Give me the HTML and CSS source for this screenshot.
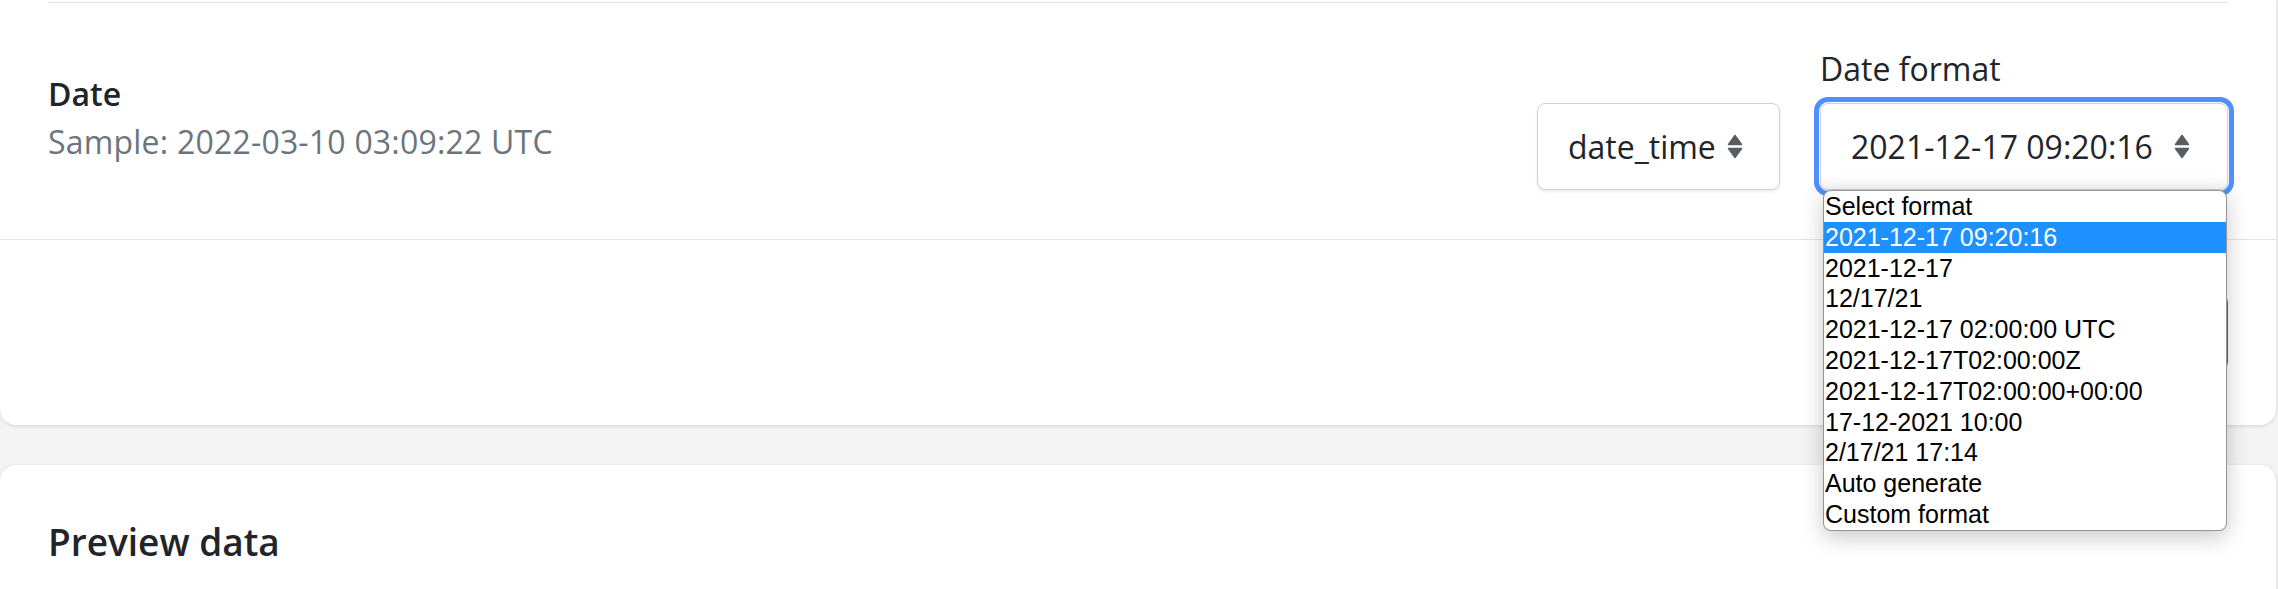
FILE: index.html
```html
<!DOCTYPE html>
<html lang="en">
<head>
<meta charset="utf-8">
<title>Date mapping</title>
<link rel="stylesheet" href="styles.css">
</head>
<body>
<main class="page">
  <section class="card card-mapping">
    <div class="card-body">
      <div class="field-row">
        <div class="field-info">
          <div class="field-name">Date</div>
          <div class="field-sample">Sample: 2022-03-10 03:09:22 UTC</div>
        </div>
        <div class="field-controls">
          <div class="select select-type" role="combobox" aria-expanded="false">
            <span class="select-value">date_time</span>
            <svg class="select-arrows" viewBox="0 0 16 25" width="16" height="25" aria-hidden="true">
              <path d="M1.5 10.5 L8 1.5 L14.5 10.5 Z" />
              <path d="M1.5 14.5 L14.5 14.5 L8 23.5 Z" />
            </svg>
          </div>
          <div class="format-field">
            <label class="format-label">Date format</label>
            <div class="select-wrap">
              <div class="select select-format" role="combobox" aria-expanded="true">
                <span class="select-value">2021-12-17 09:20:16</span>
                <svg class="select-arrows" viewBox="0 0 16 25" width="16" height="25" aria-hidden="true">
                  <path d="M1.5 10.5 L8 1.5 L14.5 10.5 Z" />
                  <path d="M1.5 14.5 L14.5 14.5 L8 23.5 Z" />
                </svg>
              </div>
              <ul class="dropdown" role="listbox">
                <li>Select format</li>
                <li class="selected">2021-12-17 09:20:16</li>
                <li>2021-12-17</li>
                <li>12/17/21</li>
                <li>2021-12-17 02:00:00 UTC</li>
                <li>2021-12-17T02:00:00Z</li>
                <li>2021-12-17T02:00:00+00:00</li>
                <li>17-12-2021 10:00</li>
                <li>2/17/21 17:14</li>
                <li>Auto generate</li>
                <li>Custom format</li>
              </ul>
            </div>
          </div>
        </div>
      </div>
    </div>
    <div class="card-footer">
      <button class="btn-primary" type="button" aria-label="Continue"></button>
    </div>
  </section>
  <section class="card card-preview">
    <h2 class="card-title">Preview data</h2>
  </section>
</main>
</body>
</html>
```
FILE: styles.css
```css
html, body {
  margin: 0;
  height: 100%;
  overflow: hidden;
  background: #f4f4f4;
}

body {
  font-family: "Open Sans", "Noto Sans", sans-serif;
  font-size: 32px;
  line-height: 1.5;
  color: #212529;
}

.page {
  display: flex;
  flex-direction: column;
  gap: 40px;
  padding-right: 2px;
}

.card {
  background: #fff;
  box-shadow: 0 1px 4px rgba(0, 0, 0, 0.13);
}

.card-mapping {
  border-radius: 0 0 16px 16px;
  padding-top: 2px;
}

.card-body {
  padding: 0 48px;
}

.field-row {
  display: flex;
  align-items: center;
  justify-content: space-between;
  border-top: 1px solid #e4e4e4;
  padding: 42px 0 49px;
}

.field-name {
  font-weight: 600;
}

.field-sample {
  color: #6c757d;
  letter-spacing: 0.2px;
}

.field-controls {
  display: flex;
  align-items: flex-end;
  gap: 40px;
}

.format-label {
  display: block;
  margin-bottom: 10px;
}

.select-wrap {
  position: relative;
}

.select {
  display: flex;
  align-items: center;
  justify-content: space-between;
  box-sizing: border-box;
  height: 87px;
  padding: 0 36px 0 30px;
  background: #fff;
  border: 1px solid #cdd1d5;
  border-radius: 8px;
  box-shadow: 0 2px 3px rgba(0, 0, 0, 0.07);
  white-space: nowrap;
}

.select-type {
  width: 243px;
}

.select-format {
  width: 408px;
  padding-right: 37px;
  outline: 5px solid #4d90fe;
  outline-offset: 1px;
  box-shadow: inset 0 -10px 14px -10px rgba(0, 0, 0, 0.08), 0 2px 3px rgba(0, 0, 0, 0.07);
}

.select-arrows {
  flex: none;
  fill: #595c60;
  stroke: #595c60;
  stroke-width: 1.5;
  stroke-linejoin: round;
}

.dropdown {
  position: absolute;
  top: 100%;
  left: 3px;
  right: 1px;
  z-index: 10;
  margin: 0;
  padding: 0;
  list-style: none;
  background: #fff;
  border: 1px solid rgba(0, 0, 0, 0.42);
  border-radius: 8px;
  box-shadow: 0 6px 22px rgba(0, 0, 0, 0.22);
  overflow: hidden;
  font-family: "Liberation Sans", Arial, sans-serif;
  font-size: 25px;
  line-height: 30.8px;
  color: #000;
}

.dropdown li {
  padding: 0 1px;
  white-space: nowrap;
}

.dropdown .selected {
  background: #1e90ff;
  color: #fff;
}

.card-footer {
  display: flex;
  align-items: center;
  justify-content: flex-end;
  box-sizing: border-box;
  height: 186px;
  padding: 0 48px;
  border-top: 1px solid #e4e4e4;
}

.btn-primary {
  width: 220px;
  height: 75px;
  border: 0;
  border-radius: 8px;
  background: #2f6fdc;
}

.card-preview {
  border-radius: 16px 16px 0 0;
  padding: 55px 48px;
  min-height: 300px;
}

.card-title {
  margin: 0;
  font-size: 37px;
  font-weight: 600;
  line-height: 1.2;
}
```
